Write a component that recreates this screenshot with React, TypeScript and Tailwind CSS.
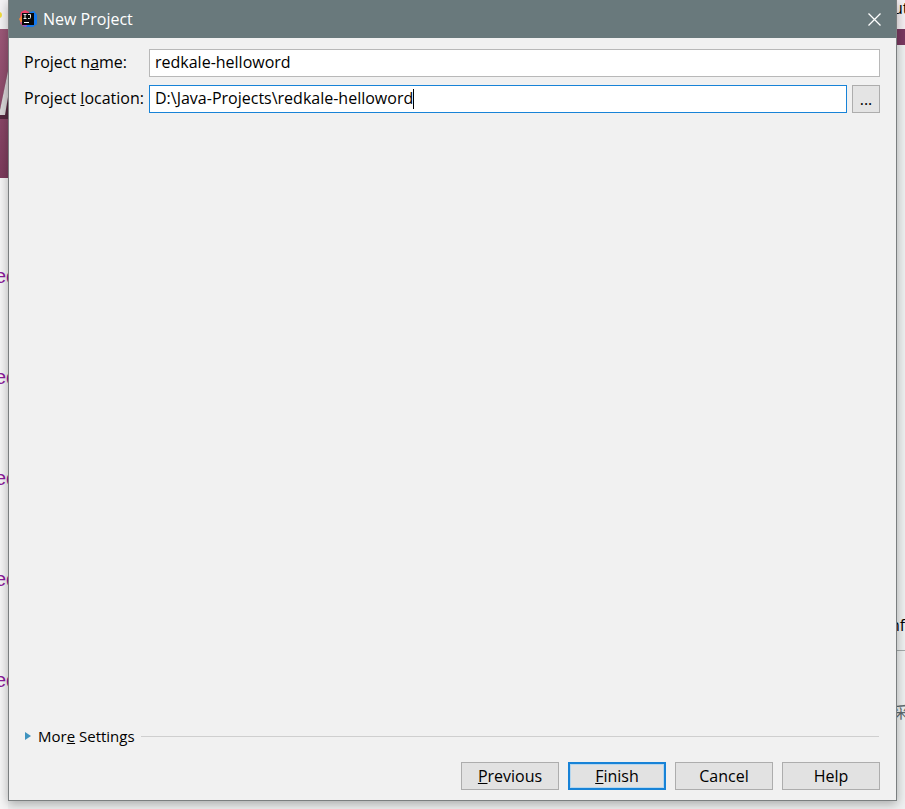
import type { ReactNode } from "react";

const inputCls =
  "block h-7 w-full border bg-white px-[5px] pb-0.5 text-base leading-6 text-black outline-none";

function IdeaLogo() {
  return (
    <svg viewBox="0 0 18 18" className="size-[18px] shrink-0" aria-hidden="true">
      <path d="M2 2 6 0l4 2v8L4 16 1 13l2-3-2-3z" fill="#f0406a" />
      <path d="M0 9l3-4 2 3-1 4-2 1z" fill="#f5853a" />
      <path d="M11 2l4-1 3 4v9l-4 3H5l-1-4z" fill="#1478ec" />
      <path d="M2 12l2 4 3 1 2-3z" fill="#9a55c4" />
      <rect x="3" y="3" width="12" height="12" fill="#080808" />
      <path
        d="M4.500 4.500h3M6 4.500v4M4.500 8.500h3M9 4.500h2.500v3q0 1-1 1H9"
        fill="none"
        stroke="#e8e8e8"
        strokeWidth="1"
      />
      <path d="M5 12.500h5" stroke="#fff" strokeWidth="1" />
    </svg>
  );
}

function DialogButton({
  children,
  primary = false,
}: {
  children: ReactNode;
  primary?: boolean;
}) {
  return (
    <button
      type="button"
      className={`flex h-7 w-[98px] items-center justify-center bg-[#e2e2e2] text-base leading-6 text-black ${
        primary
          ? "border-2 border-[#1883d7] ring-1 ring-[#b5d6ee] ring-inset"
          : "border border-[#adadad]"
      }`}
    >
      <span>{children}</span>
    </button>
  );
}

function LeftEdge() {
  return (
    <div className="w-2 shrink-0 overflow-hidden bg-[#f6f6f6]">
      <div className="flex h-[29px] items-center bg-[#f4f2f4]">
        <div className="-ml-1 h-1.5 w-1.5 rounded-full bg-[#f0dc3c]" />
      </div>
      <div className="h-[149px] bg-linear-to-b from-[#9c5878] to-[#7c3b5b]">
        <svg viewBox="0 0 8 149" className="h-full w-2" aria-hidden="true">
          <path d="M8 42v48H0V82z" fill="#54283f" />
          <path d="M8 42v26L5 86H0V81z" fill="#d9d6d8" />
        </svg>
      </div>
      <ul className="pt-[47px]">
        {[1, 2, 3, 4, 5].map((n) => (
          <li key={n} className="flex h-[101px] items-center">
            <a
              href="#"
              className="-ml-[5px] font-['Liberation_Sans',sans-serif] text-xl leading-6 text-[#8b1a9b]"
            >
              ed
            </a>
          </li>
        ))}
      </ul>
    </div>
  );
}

function RightEdge() {
  return (
    <div className="w-2 shrink-0 overflow-hidden bg-[#eff1f1] whitespace-nowrap text-black">
      <div className="flex h-[29px] bg-[#f4eff2] text-base leading-4">
        <span className="-ml-1">ut</span>
      </div>
      <div className="h-4 bg-[#7a3860]" />
      <div className="h-[570px] bg-[#eff1f1]" />
      <div className="flex h-9 border-b border-[#a5abab] text-base leading-5">
        <span className="-ml-[7px]">nf</span>
      </div>
      <div className="flex pt-[50px] font-['Noto_Sans_CJK_SC',sans-serif] text-base leading-5 text-[#5f6b70]">
        <span className="-ml-1">采</span>
      </div>
    </div>
  );
}

export default function App() {
  return (
    <div className="flex min-h-screen bg-[#eff1f1] font-['Open_Sans',sans-serif]">
      <LeftEdge />
      <main className="relative mb-2 flex min-w-0 flex-1 flex-col border-x border-b border-[#7b7f80] bg-[#f1f1f1] text-black shadow-[0_3px_10px_rgba(0,0,0,0.3)]">
        <header className="flex h-[38px] items-center gap-1.5 bg-[#69797c] pr-[11px] pl-2.5">
          <IdeaLogo />
          <h1 className="flex-1 text-base leading-6 text-white">New Project</h1>
          <button type="button" aria-label="Close" className="p-1">
            <svg viewBox="0 0 13 13" className="size-[13px]" aria-hidden="true">
              <path d="M.5.5l12 12M12.500.5l-12 12" stroke="#fff" strokeWidth="1.300" />
            </svg>
          </button>
        </header>

        <form className="grid grid-cols-[119px_1fr] items-center gap-x-1.5 gap-y-2 pt-[11px] pr-4 pl-[15px] text-base leading-6">
          <label htmlFor="name" className="pb-0.5 whitespace-nowrap">
            Project n<u>a</u>me:
          </label>
          <input
            id="name"
            defaultValue="redkale-helloword"
            className={`${inputCls} border-[#b8b8b8]`}
          />
          <label htmlFor="location" className="pb-0.5 whitespace-nowrap">
            Project <u>l</u>ocation:
          </label>
          <div className="flex gap-[5px]">
            <div className="relative flex-1">
              <input
                id="location"
                defaultValue="D:\Java-Projects\redkale-helloword"
                className={`${inputCls} border-[#1883d7]`}
              />
              <span className="absolute top-1 left-[264px] h-5 w-px bg-black" />
            </div>
            <button
              type="button"
              aria-label="Browse"
              className="flex h-7 w-7 items-center justify-center border border-[#adadad] bg-[#e4e4e4]"
            >
              ...
            </button>
          </div>
        </form>

        <div className="mt-auto flex items-center gap-1.5 pr-[17px] pl-4">
          <button type="button" className="flex items-center gap-[7px] text-[15px] leading-5">
            <svg viewBox="0 0 6 8" className="h-2 w-1.5" aria-hidden="true">
              <path d="M0 0l6 4-6 4z" fill="#3f93bf" />
            </svg>
            <span>
              Mor<u>e</u> Settings
            </span>
          </button>
          <hr className="flex-1 border-[#cfcfcf]" />
        </div>

        <footer className="flex justify-end gap-[9px] pt-4 pr-4 pb-2.5">
          <DialogButton>
            <u>P</u>revious
          </DialogButton>
          <DialogButton primary>
            <u>F</u>inish
          </DialogButton>
          <DialogButton>Cancel</DialogButton>
          <DialogButton>Help</DialogButton>
        </footer>
      </main>
      <RightEdge />
    </div>
  );
}
